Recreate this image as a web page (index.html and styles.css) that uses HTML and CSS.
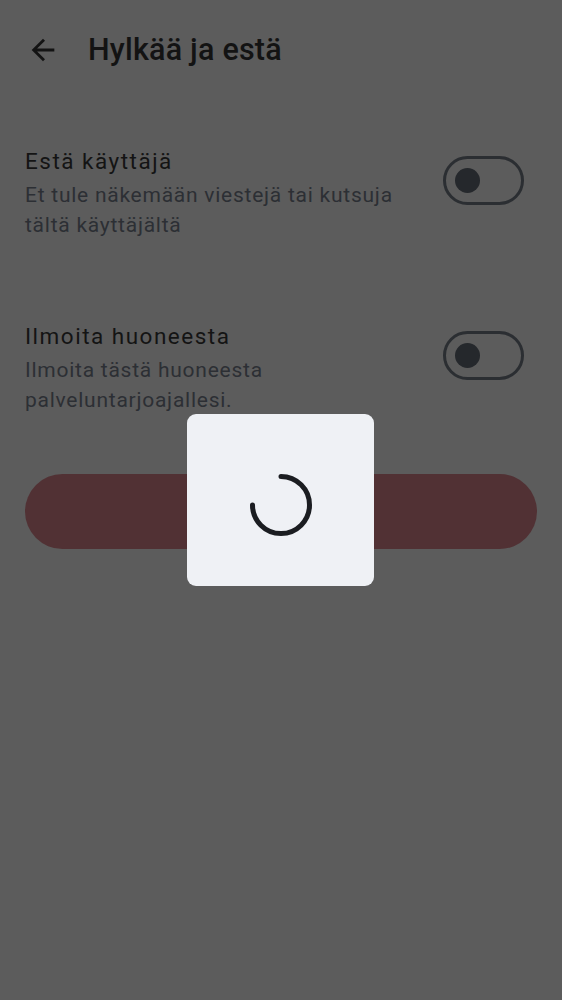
FILE: index.html
```html
<!DOCTYPE html>
<html lang="fi">
<head>
<meta charset="utf-8">
<title>Hylkää ja estä</title>
<link rel="stylesheet" href="styles.css">
</head>
<body>
<div class="screen">
  <header class="topbar">
    <span class="back" aria-label="Takaisin">
      <svg viewBox="0 0 24 24" width="34" height="34"><path d="M20 11H7.83l5.59-5.59L12 4l-8 8 8 8 1.41-1.41L7.83 13H20v-2z" fill="currentColor"/></svg>
    </span>
    <h1 class="title">Hylkää ja estä</h1>
  </header>

  <section class="list">
    <div class="item">
      <div class="texts">
        <div class="item-title">Estä käyttäjä</div>
        <div class="item-sub">Et tule näkemään viestejä tai kutsuja tältä käyttäjältä</div>
      </div>
      <span class="switch"><span class="knob"></span></span>
    </div>
    <div class="item">
      <div class="texts">
        <div class="item-title">Ilmoita huoneesta</div>
        <div class="item-sub">Ilmoita tästä huoneesta palveluntarjoajallesi.</div>
      </div>
      <span class="switch"><span class="knob"></span></span>
    </div>
  </section>

  <div class="action">
    <button class="danger" type="button"></button>
  </div>
</div>

<div class="dialog" role="progressbar">
  <svg class="spinner" viewBox="0 0 64 64" width="64" height="64">
    <path d="M32 3.5 A28.5 28.5 0 1 1 3.5 32" fill="none" stroke="currentColor" stroke-width="5" stroke-linecap="round"/>
  </svg>
</div>
</body>
</html>
```
FILE: styles.css
```css
html, body {
  margin: 0;
  padding: 0;
  background: #5c5c5c;
  font-family: Roboto, "Noto Sans", "Liberation Sans", sans-serif;
}
.screen {
  width: 562px;
  min-height: 1000px;
  box-sizing: border-box;
}
.topbar {
  height: 100px;
  display: flex;
  align-items: center;
  padding-left: 26px;
}
.back {
  width: 34px;
  height: 34px;
  color: #131313;
  display: flex;
}
.title {
  margin: 0 0 0 28px;
  font-size: 30.5px;
  font-weight: 500;
  color: #131313;
  line-height: 36px;
  letter-spacing: 0.2px;
}
.list {
  display: flex;
  flex-direction: column;
  gap: 79px;
  padding: 44px 38px 0 25px;
}
.item {
  display: flex;
  align-items: flex-start;
  justify-content: space-between;
}
.texts {
  width: 395px;
}
.item-title {
  font-size: 22.5px;
  line-height: 35px;
  color: #141414;
  letter-spacing: 1.5px;
}
.item-sub {
  font-size: 21px;
  line-height: 30px;
  color: #2c2f34;
  letter-spacing: 0.75px;
  margin-top: 1px;
}
.switch {
  margin-top: 12px;
  width: 81px;
  height: 49px;
  box-sizing: border-box;
  border: 3px solid #2b2e32;
  border-radius: 25px;
  display: flex;
  align-items: center;
  padding-left: 9px;
}
.knob {
  width: 25px;
  height: 25px;
  border-radius: 50%;
  background: #25282c;
}
.action {
  padding: 59px 25px 0;
}
.danger {
  display: block;
  width: 100%;
  height: 75px;
  border: 0;
  border-radius: 38px;
  background: #513134;
}
.dialog {
  position: absolute;
  left: 187px;
  top: 414px;
  width: 187px;
  height: 172px;
  border-radius: 9px;
  background: #eff1f5;
  display: flex;
  align-items: center;
  justify-content: center;
  color: #1b1d21;
}
.spinner {
  display: block;
  margin-left: 1px;
  margin-top: 10px;
}
```
